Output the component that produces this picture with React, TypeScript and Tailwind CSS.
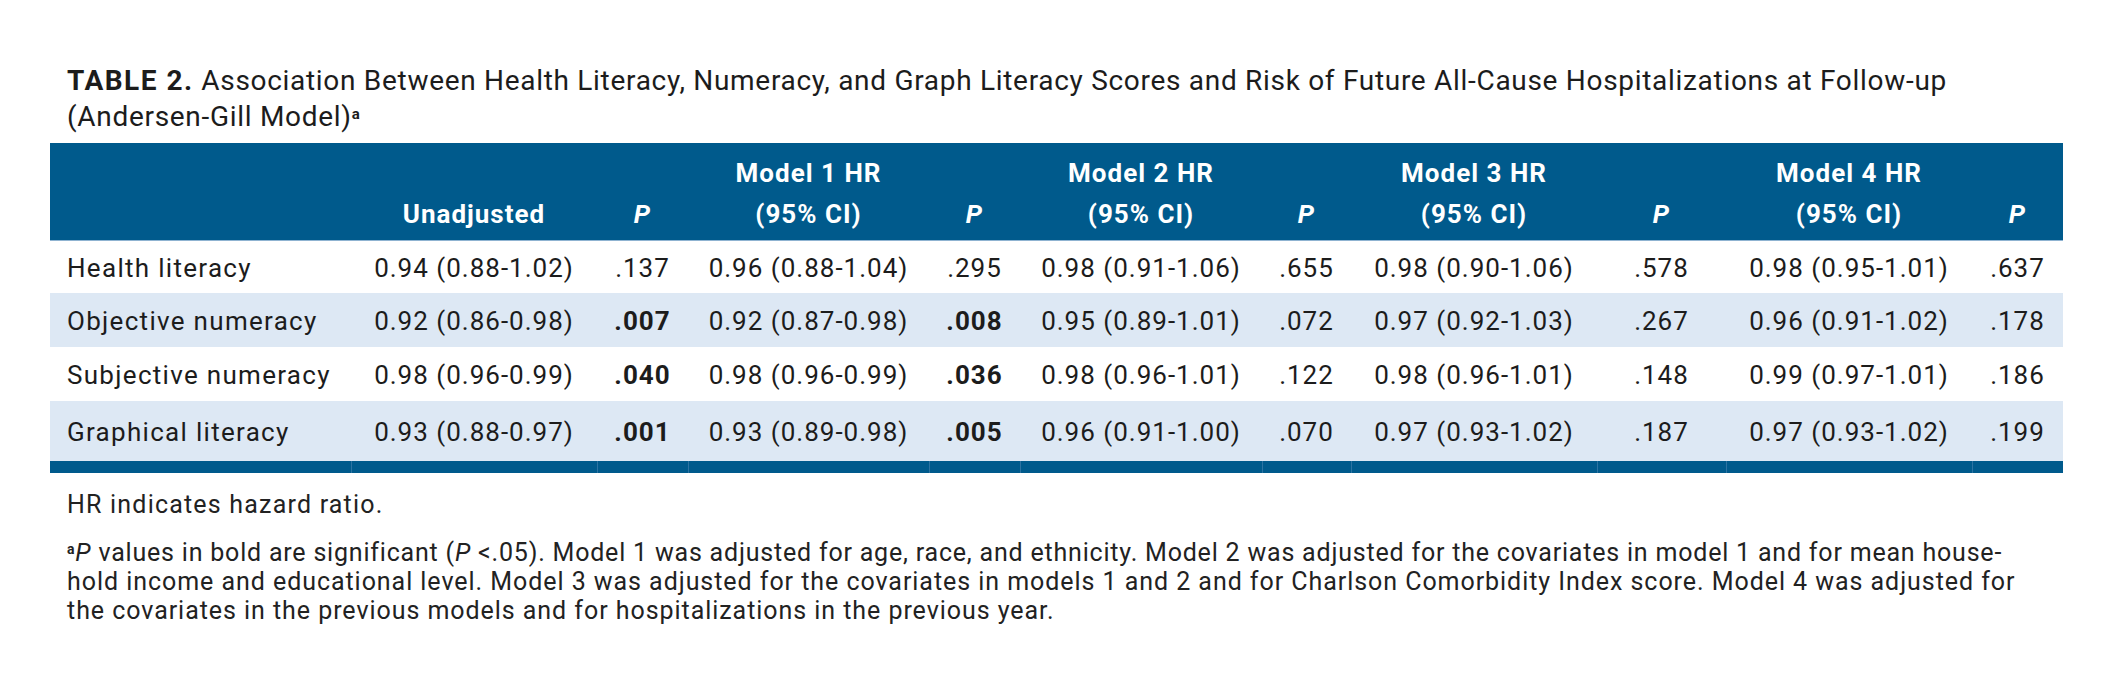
import React from "react";

type Row = {
  label: string;
  cells: [string, string, boolean][];
};

const rows: Row[] = [
  {
    label: "Health literacy",
    cells: [
      ["0.94 (0.88-1.02)", ".137", false],
      ["0.96 (0.88-1.04)", ".295", false],
      ["0.98 (0.91-1.06)", ".655", false],
      ["0.98 (0.90-1.06)", ".578", false],
      ["0.98 (0.95-1.01)", ".637", false],
    ],
  },
  {
    label: "Objective numeracy",
    cells: [
      ["0.92 (0.86-0.98)", ".007", true],
      ["0.92 (0.87-0.98)", ".008", true],
      ["0.95 (0.89-1.01)", ".072", false],
      ["0.97 (0.92-1.03)", ".267", false],
      ["0.96 (0.91-1.02)", ".178", false],
    ],
  },
  {
    label: "Subjective numeracy",
    cells: [
      ["0.98 (0.96-0.99)", ".040", true],
      ["0.98 (0.96-0.99)", ".036", true],
      ["0.98 (0.96-1.01)", ".122", false],
      ["0.98 (0.96-1.01)", ".148", false],
      ["0.99 (0.97-1.01)", ".186", false],
    ],
  },
  {
    label: "Graphical literacy",
    cells: [
      ["0.93 (0.88-0.97)", ".001", true],
      ["0.93 (0.89-0.98)", ".005", true],
      ["0.96 (0.91-1.00)", ".070", false],
      ["0.97 (0.93-1.02)", ".187", false],
      ["0.97 (0.93-1.02)", ".199", false],
    ],
  },
];

const rowStyles = [
  "h-[53px] bg-white pt-[3px]",
  "h-[54px] bg-[#dde8f4]",
  "h-[54px] bg-white",
  "h-[60px] bg-[#dde8f4]",
];

const models = ["Model 1 HR", "Model 2 HR", "Model 3 HR", "Model 4 HR"];

export default function App() {
  return (
    <div className="w-[2113px] h-[688px] bg-white font-['Roboto',sans-serif] text-[#1c1c1c]">
      <div className="pl-[50px] pt-[63px]">
        <p className="pl-[17px] text-[28px] leading-[36px] tracking-[0.7px]">
          <span className="font-bold tracking-[1.5px]">TABLE 2.</span> Association Between Health Literacy, Numeracy, and Graph
          Literacy Scores and Risk of Future All-Cause Hospitalizations at Follow-up
          <br />
          (Andersen-Gill Model)<sup className="text-[15px] font-bold">a</sup>
        </p>

        <table className="mt-[8px] table-fixed border-collapse text-[26px] tracking-[1px]">
          <colgroup>
            <col className="w-[301px]" />
            <col className="w-[246px]" />
            <col className="w-[91px]" />
            <col className="w-[241px]" />
            <col className="w-[91px]" />
            <col className="w-[242px]" />
            <col className="w-[89px]" />
            <col className="w-[246px]" />
            <col className="w-[129px]" />
            <col className="w-[246px]" />
            <col className="w-[91px]" />
          </colgroup>
          <thead>
            <tr className="h-[97px] bg-[#005a8c] border-b border-[#8fb3d1] font-bold text-white leading-[41px]">
              <th />
              <th className="align-bottom pb-[5px] text-center">Unadjusted</th>
              <th className="align-bottom pb-[5px] text-center italic">P</th>
              {models.map((m) => (
                <React.Fragment key={m}>
                  <th className="align-bottom pb-[5px] text-center">
                    {m}
                    <br />
                    (95% CI)
                  </th>
                  <th className="align-bottom pb-[5px] text-center italic">P</th>
                </React.Fragment>
              ))}
            </tr>
          </thead>
          <tbody>
            {rows.map((r, i) => (
              <tr key={r.label} className={rowStyles[i]}>
                <td className={i === 0 ? "pl-[17px] pt-[4px] align-middle whitespace-nowrap tracking-[1.3px]" : "pl-[17px] pt-[2px] align-middle whitespace-nowrap tracking-[1.3px]"}>
                  {r.label}
                </td>
                {r.cells.map(([hr, p, sig], j) => (
                  <React.Fragment key={j}>
                    <td className={i === 0 ? "pt-[4px] text-center align-middle whitespace-nowrap" : "pt-[2px] text-center align-middle whitespace-nowrap"}>{hr}</td>
                    <td
                      className={
                        (i === 0 ? "pt-[4px] " : "pt-[2px] ") +
                        (sig ? "text-center align-middle font-bold" : "text-center align-middle")
                      }
                    >
                      {p}
                    </td>
                  </React.Fragment>
                ))}
              </tr>
            ))}
            <tr className="h-[12px] bg-[#005a8c]">
              {Array.from({ length: 11 }).map((_, k) => (
                <td key={k} className="p-0 border-l border-[#2d73a2] first:border-l-0" />
              ))}
            </tr>
          </tbody>
        </table>

        <div className="pl-[17px] text-[25px] leading-[29px] tracking-[0.8px] text-[#222]">
          <p className="mt-[17px] tracking-[1.2px]">HR indicates hazard ratio.</p>
          <p className="mt-[19px]">
            <span className="block whitespace-nowrap">
              <sup className="text-[14px] font-bold">a</sup>
              <i>P</i> values in bold are significant (<i>P</i> &lt;.05). Model 1 was adjusted for age, race, and ethnicity. Model
              2 was adjusted for the covariates in model 1 and for mean house-
            </span>
            <span className="block whitespace-nowrap tracking-[0.95px]">
              hold income and educational level. Model 3 was adjusted for the covariates in models 1 and 2 and for Charlson
              Comorbidity Index score. Model 4 was adjusted for
            </span>
            <span className="block whitespace-nowrap tracking-[0.95px]">
              the covariates in the previous models and for hospitalizations in the previous year.
            </span>
          </p>
        </div>
      </div>
    </div>
  );
}
